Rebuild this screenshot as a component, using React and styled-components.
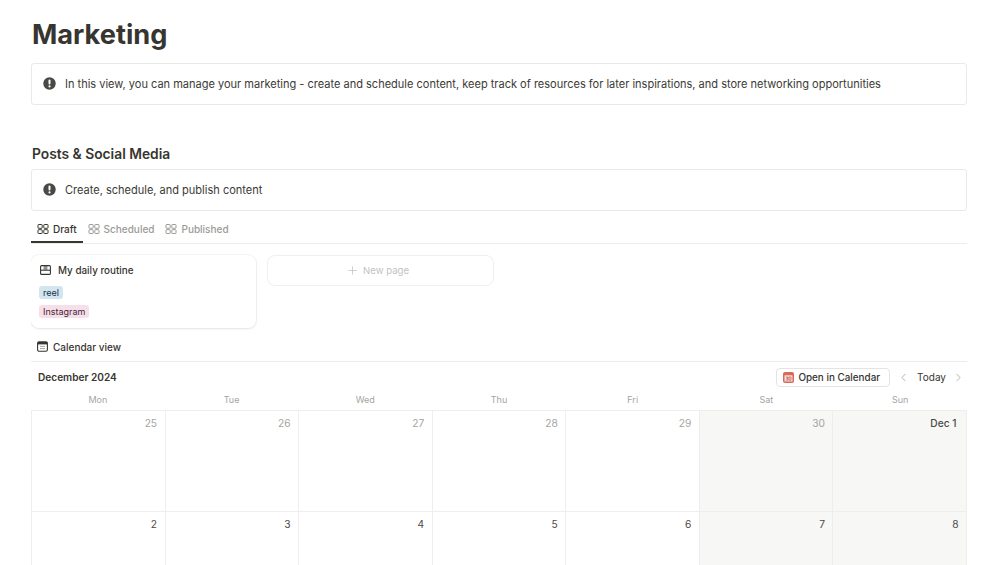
import React from "react";
import styled, { createGlobalStyle } from "styled-components";
import { ChevronLeft, ChevronRight, Plus } from "lucide-react";

const Global = createGlobalStyle`
  html, body { margin: 0; padding: 0; background: #fff; height: 565px; overflow: hidden; }
  body { font-family: Inter, "Liberation Sans", sans-serif; color: #3b3a35; }
`;

const Page = styled.main`
  width: 936px;
  height: 565px;
  margin-left: 31px;
  overflow: hidden;
  display: flex;
  flex-direction: column;
  & > * { flex: none; }
`;
const Title = styled.h1`
  margin: 0;
  height: 63px;
  padding: 16px 0 0 1px;
  box-sizing: border-box;
  font-size: 27.2px;
  line-height: 38px;
  font-weight: 700;
  color: #37352f;
`;
const Callout = styled.div`
  height: 42px;
  box-sizing: border-box;
  display: flex;
  align-items: center;
  gap: 9px;
  padding: 0 11px;
  border: 1px solid #e9e9e7;
  border-radius: 3px;
  font-size: 11.03px;
  color: #3b3a35;
`;
const Heading = styled.h2`
  margin: 39px 0 0;
  padding-left: 1px;
  height: 25px;
  font-size: 13.8px;
  line-height: 20px;
  font-weight: 600;
  color: #37352f;
`;
const Tabs = styled.nav`
  display: flex;
  margin-top: 7px;
  height: 25px;
  border-bottom: 1px solid #ececea;
`;
const Tab = styled.div`
  display: flex;
  align-items: center;
  gap: 4px;
  padding: 0 6px 2px;
  height: 21px;
  margin-right: -1px;
  font-size: 10px;
  font-weight: 500;
  color: ${p => (p.$active ? "#37352f" : "#9b9a97")};
  border-bottom: 2px solid ${p => (p.$active ? "#37352f" : "transparent")};
`;
const Board = styled.section`
  display: flex;
  gap: 11px;
  align-items: flex-start;
  margin-top: 11px;
`;
const Card = styled.article`
  width: 225px;
  height: 73px;
  box-sizing: border-box;
  padding: 7px 8px;
  border-radius: 8px;
  background: #fff;
  box-shadow: 0 0 0 1px rgba(15, 15, 15, 0.04), 0 1px 3px rgba(15, 15, 15, 0.08);
`;
const CardTitle = styled.div`
  display: flex;
  align-items: center;
  gap: 7px;
  padding-left: 1px;
  height: 15px;
  font-size: 9.9px;
  font-weight: 500;
  color: #37352f;
`;
const Tag = styled.div`
  width: fit-content;
  height: 13px;
  margin-top: ${p => p.$mt}px;
  padding: 0 4px;
  border-radius: 3px;
  background: ${p => p.$bg};
  color: ${p => p.$fg};
  font-size: 9px;
  line-height: 13px;
`;
const NewPage = styled.div`
  width: 227px;
  height: 31px;
  box-sizing: border-box;
  display: flex;
  align-items: center;
  justify-content: center;
  gap: 4px;
  padding-right: 6px;
  border: 1px solid #efefed;
  border-radius: 8px;
  color: #c3c2bf;
  font-size: 9.6px;
`;
const ViewLabel = styled.div`
  display: flex;
  align-items: center;
  gap: 5px;
  height: 34px;
  padding: 4px 0 0 6px;
  box-sizing: border-box;
  border-bottom: 1px solid #ececea;
  font-size: 10px;
  font-weight: 500;
  color: #37352f;
`;
const MonthBar = styled.div`
  display: flex;
  align-items: center;
  justify-content: space-between;
  height: 30px;
  padding: 0 2px 0 7px;
`;
const Month = styled.div`
  font-size: 10.1px;
  font-weight: 600;
  color: #37352f;
`;
const Controls = styled.div`
  display: flex;
  align-items: center;
`;
const OpenButton = styled.div`
  display: flex;
  align-items: center;
  gap: 4px;
  height: 17px;
  padding: 0 9px 0 6px;
  margin-right: 7px;
  border: 1px solid #e4e4e2;
  border-radius: 4px;
  font-size: 9.9px;
  font-weight: 500;
  color: #37352f;
`;
const Today = styled.span`
  font-size: 10px;
  color: #37352f;
  margin: 0 6px 0 7px;
`;
const Weekdays = styled.div`
  display: grid;
  grid-template-columns: repeat(7, 1fr);
  height: 18px;
`;
const Weekday = styled.div`
  text-align: center;
  font-size: 9px;
  line-height: 16px;
  color: #a5a4a1;
`;
const Grid = styled.div`
  display: grid;
  grid-template-columns: repeat(7, 1fr);
  grid-auto-rows: 101px;
  border-top: 1px solid #eeeeec;
  border-left: 1px solid #eeeeec;
`;
const Cell = styled.div`
  box-sizing: border-box;
  border-right: 1px solid #eeeeec;
  border-bottom: 1px solid #eeeeec;
  background: ${p => (p.$weekend ? "#f7f7f5" : "#fff")};
  padding: 5px ${p => (p.$strong ? 9.5 : 7.5)}px 0 0;
  text-align: right;
  font-size: 10.2px;
  line-height: 14px;
  color: ${p => (p.$muted ? "#a5a4a1" : "#4a4945")};
  font-weight: ${p => (p.$strong ? 500 : 400)};
`;

const AlertIcon = () => (
  <svg width="13" height="13" viewBox="0 0 13 13" aria-hidden="true" style={{ flex: "none", marginTop: -2 }}>
    <circle cx="6.5" cy="6.5" r="6.2" fill="#4a4945" />
    <rect x="5.5" y="2.6" width="2" height="5" rx="1" fill="#fff" />
    <circle cx="6.5" cy="9.4" r="1.05" fill="#fff" />
  </svg>
);
const GalleryIcon = ({ c }) => (
  <svg width="12" height="10" viewBox="0 0 12 10" fill="none" stroke={c} strokeWidth="1" aria-hidden="true">
    <rect x="1" y="0.5" width="4.2" height="3.8" rx="0.6" />
    <rect x="6.8" y="0.5" width="4.2" height="3.8" rx="0.6" />
    <rect x="1" y="5.7" width="4.2" height="3.8" rx="0.6" />
    <rect x="6.8" y="5.7" width="4.2" height="3.8" rx="0.6" />
  </svg>
);
const ReelIcon = () => (
  <svg width="11" height="10" viewBox="0 0 11 10" fill="none" aria-hidden="true">
    <rect x="0.6" y="0.6" width="9.8" height="8.8" rx="1" stroke="#37352f" strokeWidth="1.1" />
    <path d="M0.8 5.2H10.2" stroke="#37352f" strokeWidth="1.1" />
    <rect x="3.6" y="1" width="3.8" height="3.8" fill="#37352f" opacity="0.55" />
  </svg>
);
const CalendarIcon = () => (
  <svg width="11" height="11" viewBox="0 0 11 11" fill="none" aria-hidden="true">
    <rect x="0.6" y="0.8" width="9.8" height="9.4" rx="1.5" stroke="#37352f" strokeWidth="1.1" />
    <rect x="0.8" y="1" width="9.4" height="2.4" fill="#37352f" />
    <path d="M3 5.4h5M3 7.6h5" stroke="#8f8e8a" strokeWidth="0.8" />
  </svg>
);
const RedCalendar = () => (
  <svg width="11" height="11" viewBox="0 0 11 11" aria-hidden="true">
    <rect width="11" height="11" rx="2" fill="#d9695c" />
    <rect x="1.5" y="3.2" width="8" height="6.3" rx="0.6" fill="#f6ddd9" />
    <path d="M3 5h2v1H3.9v.6H5v1.6H3M6 5h2v3.2H6z" fill="none" stroke="#c9584b" strokeWidth="0.7" />
  </svg>
);

const rows = [
  [["25", 1], ["26", 1], ["27", 1], ["28", 1], ["29", 1], ["30", 1], ["Dec 1", 0]],
  [["2", 0], ["3", 0], ["4", 0], ["5", 0], ["6", 0], ["7", 0], ["8", 0]],
];
const days = ["Mon", "Tue", "Wed", "Thu", "Fri", "Sat", "Sun"];

export default function App() {
  return (
    <Page>
      <Global />
      <Title>Marketing</Title>
      <Callout>
        <AlertIcon />
        <span>In this view, you can manage your marketing - create and schedule content, keep track of resources for later inspirations, and store networking opportunities</span>
      </Callout>
      <Heading>Posts &amp; Social Media</Heading>
      <Callout>
        <AlertIcon />
        <span>Create, schedule, and publish content</span>
      </Callout>
      <Tabs>
        <Tab $active><GalleryIcon c="#37352f" />Draft</Tab>
        <Tab><GalleryIcon c="#9b9a97" />Scheduled</Tab>
        <Tab><GalleryIcon c="#9b9a97" />Published</Tab>
      </Tabs>
      <Board>
        <Card>
          <CardTitle><ReelIcon />My daily routine</CardTitle>
          <Tag $mt={9} $bg="#d3e5ef" $fg="#183347">reel</Tag>
          <Tag $mt={6} $bg="#f5e0e9" $fg="#4c2337">Instagram</Tag>
        </Card>
        <NewPage><Plus size={13} strokeWidth={1.4} />New page</NewPage>
      </Board>
      <ViewLabel><CalendarIcon />Calendar view</ViewLabel>
      <MonthBar>
        <Month>December 2024</Month>
        <Controls>
          <OpenButton><RedCalendar />Open in Calendar</OpenButton>
          <ChevronLeft size={13} color="#a5a4a1" strokeWidth={1.5} />
          <Today>Today</Today>
          <ChevronRight size={13} color="#a5a4a1" strokeWidth={1.5} />
        </Controls>
      </MonthBar>
      <Weekdays>
        {days.map(d => <Weekday key={d}>{d}</Weekday>)}
      </Weekdays>
      <Grid>
        {rows.flat().map(([label, muted], i) => (
          <Cell key={label} $muted={!!muted} $weekend={i % 7 > 4} $strong={label === "Dec 1"}>{label}</Cell>
        ))}
      </Grid>
    </Page>
  );
}
